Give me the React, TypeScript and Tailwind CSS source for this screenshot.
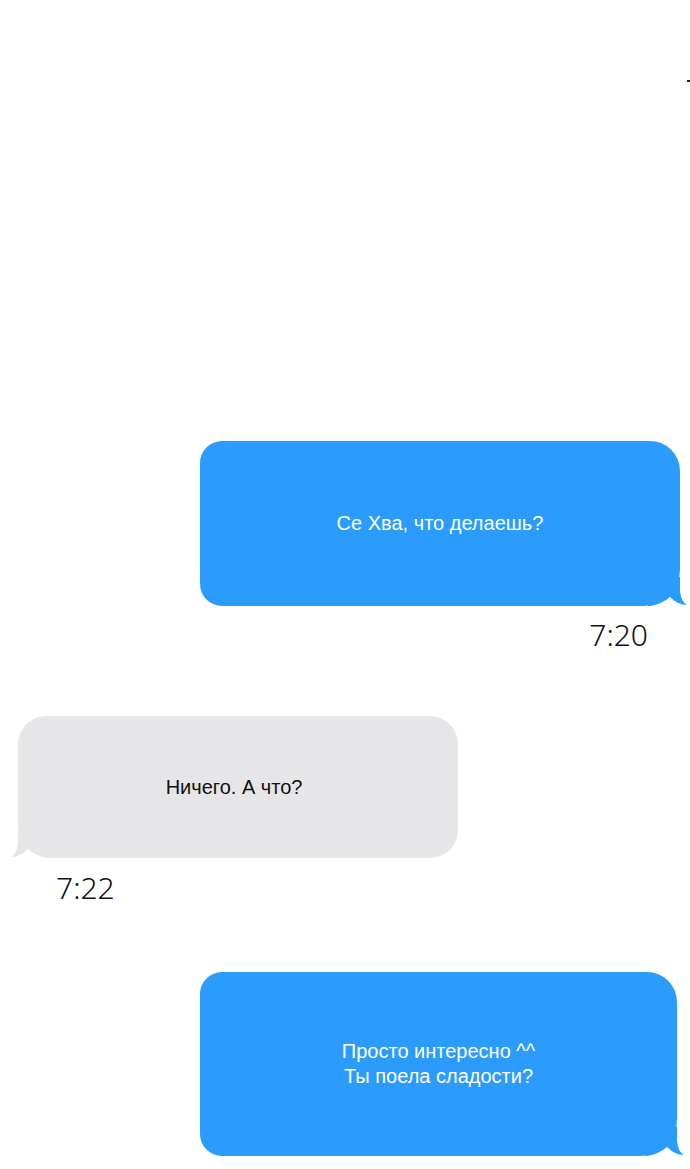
import React from "react";

type Side = "left" | "right";

const Tail: React.FC<{ side: Side; color: string }> = ({ side, color }) => (
  <svg
    width="40"
    height="30"
    viewBox="0 0 40 30"
    className={
      side === "right"
        ? "absolute right-[-8px] bottom-[-1px]"
        : "absolute left-[-8px] bottom-[-1px] -scale-x-100"
    }
  >
    <path d="M0 0 H32 V14 Q33 25 39 28 Q30 28 22 20 Q14 27 2 29 L0 29 Z" fill={color} />
  </svg>
);

const Bubble: React.FC<{
  side: Side;
  className: string;
  children: React.ReactNode;
}> = ({ side, className, children }) => {
  const blue = side === "right";
  return (
    <div
      className={`relative flex items-center justify-center text-center text-[20px] leading-[25px] ${
        blue
          ? "bg-[#2b9cfc] text-white rounded-[22px] rounded-tr-[30px] rounded-br-[36px]"
          : "bg-[#e6e6e8] text-[#111] rounded-[28px] rounded-bl-[36px] pr-[8px]"
      } ${className}`}
    >
      <Tail side={side} color={blue ? "#2b9cfc" : "#e6e6e8"} />
      <div className="relative">{children}</div>
    </div>
  );
};

const Time: React.FC<{ value: string; className: string }> = ({ value, className }) => (
  <div className={`text-[30px] leading-none font-light text-[#111] ${className}`} style={{ fontFamily: '"Noto Sans", sans-serif' }}>
    {value}
  </div>
);

export default function App() {
  return (
    <div
      className="w-[690px] h-[1169px] bg-white overflow-hidden flex flex-col"
      style={{ fontFamily: '"Liberation Sans", Arial, sans-serif' }}
    >
      <div className="flex justify-end mt-[80px]">
        <div className="w-[3px] h-[2px] bg-[#222]" />
      </div>

      <Bubble side="right" className="ml-[200px] mt-[359px] w-[480px] h-[165px]">
        Се Хва, что делаешь?
      </Bubble>
      <Time value="7:20" className="self-end mr-[42px] mt-[14px]" />

      <Bubble side="left" className="ml-[18px] mt-[66px] w-[440px] h-[142px]">
        Ничего. А что?
      </Bubble>
      <Time value="7:22" className="ml-[56px] mt-[15px]" />

      <Bubble side="right" className="ml-[200px] mt-[69px] w-[477px] h-[184px]">
        Просто интересно ^^
        <br />
        Ты поела сладости?
      </Bubble>
    </div>
  );
}
